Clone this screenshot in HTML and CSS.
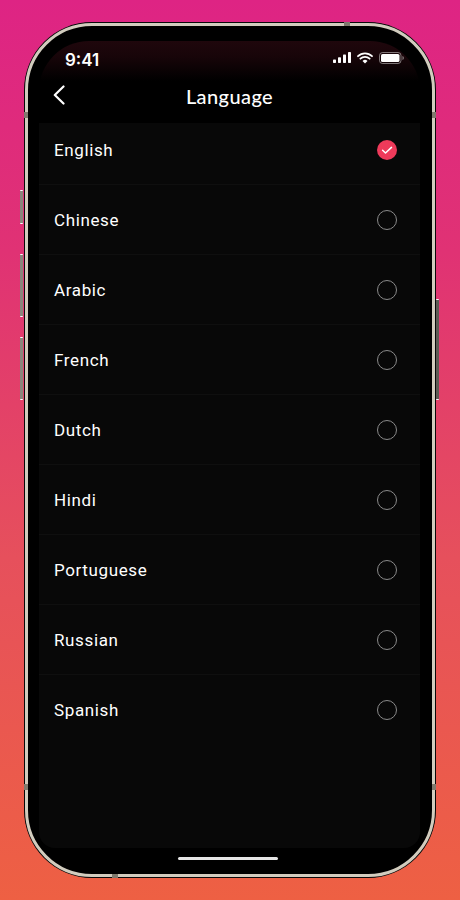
FILE: index.html
```html
<!DOCTYPE html>
<html lang="en">
<head>
<meta charset="utf-8">
<title>Language</title>
<link rel="stylesheet" href="styles.css">
</head>
<body>
<div class="phone">
  <span class="btn btn-silent"></span>
  <span class="btn btn-up"></span>
  <span class="btn btn-down"></span>
  <span class="btn btn-power"></span>
  <span class="tick tick-top"></span>
  <span class="tick tick-left"></span>
  <span class="tick tick-right"></span>
  <span class="tick tick-left-low"></span>
  <span class="tick tick-right-low"></span>
  <span class="tick tick-bottom"></span>
  <div class="frame">
    <div class="screen">
      <div class="status">
        <span class="time">9:41</span>
        <div class="status-icons">
          <svg width="18" height="11" viewBox="0 0 18 11"><rect x="0" y="7.5" width="3" height="3.5" rx=".7"/><rect x="5" y="5.2" width="3" height="5.8" rx=".7"/><rect x="10" y="2.6" width="3" height="8.4" rx=".7"/><rect x="15" y="0" width="3" height="11" rx=".7"/></svg>
          <svg width="16" height="12" viewBox="0 0 16 12"><path d="M1 4.2a10 10 0 0 1 14 0M3.4 6.7a6.6 6.6 0 0 1 9.2 0" fill="none" stroke="#fff" stroke-width="1.8" stroke-linecap="round"/><path d="M8 11.6 5.5 9a3.6 3.6 0 0 1 5 0z"/></svg>
          <svg width="25" height="12" viewBox="0 0 25 12"><rect x=".5" y=".5" width="21.500" height="11" rx="3" fill="none" stroke="#fff" stroke-opacity=".45"/><rect x="2" y="2" width="18.500" height="8" rx="1.600"/><path d="M23.500 4v4c.8-.3 1.300-1.100 1.300-2s-.5-1.700-1.300-2z" fill-opacity=".5"/></svg>
        </div>
      </div>
      <header class="nav">
        <svg class="back" width="14" height="20" viewBox="0 0 14 20"><path d="M11.500 1.500 2.800 10l8.700 8.500" fill="none" stroke="#fff" stroke-width="2.200" stroke-linecap="round" stroke-linejoin="round"/></svg>
        <h1 class="title">Language</h1>
      </header>
      <ul class="list">
        <li class="row"><span>English</span>
          <svg class="radio" width="20" height="20" viewBox="0 0 20 20"><circle cx="10" cy="10" r="10" fill="#ee3a5a"/><path d="M5.600 10.300 8.500 13l6-5.600" fill="none" stroke="#fff" stroke-width="1.500" stroke-linecap="round" stroke-linejoin="round"/></svg></li>
        <li class="row"><span>Chinese</span><i class="circle"></i></li>
        <li class="row"><span>Arabic</span><i class="circle"></i></li>
        <li class="row"><span>French</span><i class="circle"></i></li>
        <li class="row"><span>Dutch</span><i class="circle"></i></li>
        <li class="row"><span>Hindi</span><i class="circle"></i></li>
        <li class="row"><span>Portuguese</span><i class="circle"></i></li>
        <li class="row"><span>Russian</span><i class="circle"></i></li>
        <li class="row last"><span>Spanish</span><i class="circle"></i></li>
      </ul>
      <div class="home"><span class="home-bar"></span></div>
    </div>
  </div>
</div>
</body>
</html>
```
FILE: styles.css
```css
* { box-sizing: border-box; }
html, body { margin: 0; height: 100%; }
body {
  width: 460px;
  height: 900px;
  overflow: hidden;
  background: linear-gradient(180deg, #de2484 0%, #e03274 28%, #e6505c 62%, #ee6043 100%);
  padding: 22px 24px;
  font-family: Roboto, sans-serif;
  color: #fff;
}
.phone {
  position: relative;
  width: 412px;
  height: 856px;
  border-radius: 68px;
  background: #111;
  padding: 1px;
}
.frame {
  height: 100%;
  border-radius: 67px;
  border: 3px solid #d2ccbe;
  background: #000;
  padding: 15px 12px 0 11px;
  box-shadow: 0 0 0 .5px #000;
}
.screen {
  position: relative;
  height: 100%;
  display: flex;
  flex-direction: column;
  border-radius: 50px 50px 0 0;
  background: linear-gradient(180deg, #1f070c 0%, #180509 38%, #000 100%) top / 100% 40px no-repeat;
}
.btn { position: absolute; width: 3px; background: #8a867c; border-top: 1px solid #fff; border-bottom: 1px solid #fff; border-radius: 1px; }
.btn-silent { left: -4px; top: 168px; height: 34px; }
.btn-up { left: -4px; top: 232px; height: 63px; }
.btn-down { left: -4px; top: 315px; height: 63px; }
.btn-power { right: -3px; top: 277px; height: 101px; background: #5e5b54; }
.tick { position: absolute; background: #7f7a6e; z-index: 2; }
.tick-top { left: 320px; top: 0; width: 6px; height: 4px; }
.tick-bottom { left: 88px; bottom: 0; width: 6px; height: 4px; }
.tick-left { left: 0; top: 90px; width: 4px; height: 6px; }
.tick-right { right: 0; top: 90px; width: 4px; height: 6px; }
.tick-left-low { left: 0; top: 762px; width: 4px; height: 6px; }
.tick-right-low { right: 0; top: 762px; width: 4px; height: 6px; }
.status {
  height: 38px;
  display: flex;
  align-items: center;
  justify-content: space-between;
  padding: 0 16px 0 26px;
}
.time { font: 600 17px Inter, sans-serif; }
.status-icons { display: flex; align-items: center; gap: 6px; margin-bottom: 5px; }
.status-icons svg { fill: #fff; display: block; }
.nav {
  height: 44px;
  padding-bottom: 11px;
  display: flex;
  align-items: center;
  justify-content: center;
  position: relative;
}
.back { position: absolute; left: 13px; top: 6px; }
.title { margin: 0; font: 500 20px/1 Lato, sans-serif; letter-spacing: .4px; }
.list {
  margin: 0;
  padding: 0;
  list-style: none;
  flex: 1;
  background: #080808;
  border-radius: 0 0 16px 16px;
}
.row {
  height: 70px;
  padding: 0 23px 0 15px;
  display: flex;
  align-items: center;
  justify-content: space-between;
  border-bottom: 1px solid #0f0f0f;
  font-size: 17px;
  letter-spacing: .62px;
  color: #fff;
}
.row:first-child { height: 62px; padding-bottom: 8px; }
.row.last { border-bottom: 0; }
.circle {
  width: 20px;
  height: 20px;
  border-radius: 50%;
  border: 1px solid #8a8a8a;
}
.radio { display: block; }
.home {
  height: 26px;
  flex: none;
  display: flex;
  justify-content: center;
  padding: 9px 3px 0 0;
}
.home-bar { width: 100px; height: 3px; border-radius: 2px; background: #e6e6e6; }
```
